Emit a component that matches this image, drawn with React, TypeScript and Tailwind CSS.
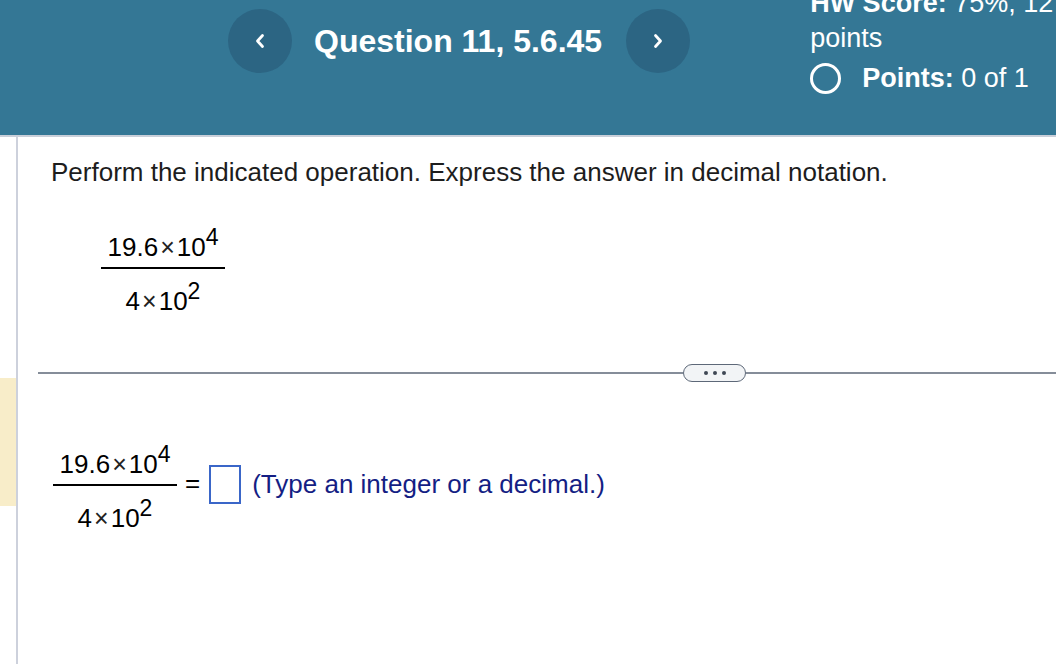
import React from "react";

const font = { fontFamily: '"Liberation Sans", Arial, Helvetica, sans-serif' };

function Chevron({ dir }: { dir: "left" | "right" }) {
  return (
    <svg width="12" height="16" viewBox="0 0 12 16" fill="none">
      <path
        d={dir === "left" ? "M8.5 2.5 L3.5 8 L8.5 13.5" : "M3.5 2.5 L8.5 8 L3.5 13.5"}
        stroke="white"
        strokeWidth="2.8"
        strokeLinecap="round"
        strokeLinejoin="round"
      />
    </svg>
  );
}

function Power({ base, exp }: { base: string; exp: string }) {
  return (
    <span className="whitespace-nowrap">
      {base}
      <span className="mx-[2px] text-[25px] text-[#222]">×</span>
      10
      <span className="relative -top-[11px] text-[23px]">{exp}</span>
    </span>
  );
}

function Fraction({ num, den }: { num: React.ReactNode; den: React.ReactNode }) {
  return (
    <div className="inline-flex flex-col items-center text-[26px] leading-[28px] text-black">
      <div className="px-[2px]">{num}</div>
      <div className="mt-[5px] h-[2px] w-[124px] bg-black" />
      <div className="mt-[18px]">{den}</div>
    </div>
  );
}

export default function App() {
  return (
    <div style={font} className="h-[664px] w-[1056px] overflow-hidden bg-white">
      <header className="flex h-[137px] items-start overflow-hidden border-b-2 border-[#c9cfd9] bg-[#347795] text-white">
        <div className="ml-[228px] mt-[9px] flex h-16 shrink-0 items-center">
          <button className="flex h-16 w-16 shrink-0 items-center justify-center rounded-full bg-[#2c6583]">
            <Chevron dir="left" />
          </button>
          <h1 className="ml-[22px] whitespace-nowrap text-[32px] font-bold">Question 11, 5.6.45</h1>
          <button className="ml-[24px] flex h-16 w-16 shrink-0 items-center justify-center rounded-full bg-[#2c6583]">
            <Chevron dir="right" />
          </button>
        </div>

        <div className="ml-[120px] shrink-0 text-[27px]">
          <div className="-mt-[14px] leading-[35px]">
            <div className="whitespace-nowrap">
              <span className="font-bold">HW Score:</span> 75%, 12 of 16
            </div>
            <div>points</div>
          </div>
          <div className="mt-[7px] flex items-center">
            <span className="h-[31px] w-[31px] rounded-full border-[3px] border-white" />
            <span className="ml-[21px] whitespace-nowrap leading-[31px]">
              <span className="font-bold">Points:</span> 0 of 1
            </span>
          </div>
        </div>
      </header>

      <div className="flex">
        <div className="w-[16px] shrink-0">
          <div className="mt-[241px] h-[128px] bg-[#f8edc9]" />
        </div>
        <div className="h-[527px] w-[2px] shrink-0 bg-[#cdd1dc]" />

        <main className="flex-1">
          <p className="ml-[33px] mt-[20px] text-[26px] leading-[30px] text-[#1d1d1d]">
            Perform the indicated operation. Express the answer in decimal notation.
          </p>

          <div className="ml-[83px] mt-[46px]">
            <Fraction num={<Power base="19.6" exp="4" />} den={<Power base="4" exp="2" />} />
          </div>

          <div className="ml-[20px] mt-[48px] flex h-[18px] items-center">
            <div className="h-[2px] w-[645px] bg-[#858d99]" />
            <button className="flex h-[18px] w-[63px] shrink-0 items-center justify-center gap-[5px] rounded-full border-[1.5px] border-[#5d6878] bg-[#f2f4f6]">
              <span className="h-[4px] w-[4px] rounded-full bg-[#3f4754]" />
              <span className="h-[4px] w-[4px] rounded-full bg-[#3f4754]" />
              <span className="h-[4px] w-[4px] rounded-full bg-[#3f4754]" />
            </button>
            <div className="h-[2px] flex-1 bg-[#858d99]" />
          </div>

          <div className="ml-[35px] mt-[68px] flex items-start">
            <Fraction num={<Power base="19.6" exp="4" />} den={<Power base="4" exp="2" />} />
            <span className="ml-[8px] mt-[19px] text-[26px] leading-[28px] text-black">=</span>
            <span className="ml-[9px] mt-[15px] h-[39px] w-[32px] border-2 border-[#3a66c8] bg-white" />
            <span className="ml-[11px] mt-[19px] text-[26px] leading-[30px] text-[#141e84]">
              (Type an integer or a decimal.)
            </span>
          </div>
        </main>
      </div>
    </div>
  );
}
